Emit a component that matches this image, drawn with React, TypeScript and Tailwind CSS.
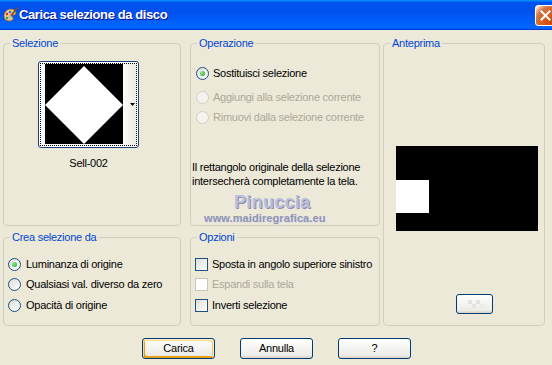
import React from 'react';
import clsx from 'clsx';

const Radio: React.FC<{ checked?: boolean; disabled?: boolean }> = ({ checked, disabled }) => (
  <span
    className={clsx(
      'w-[13px] h-[13px] rounded-full border flex items-center justify-center shrink-0',
      disabled
        ? 'border-[#d2d0c5] bg-[#f4f3ee]'
        : 'border-[#1c5180] bg-[linear-gradient(135deg,#dcdcd7,#ffffff)]'
    )}
  >
    {checked && <span className="w-[5px] h-[5px] rounded-full bg-[radial-gradient(circle_at_35%_35%,#8ee88e,#21a121)]" />}
  </span>
);

const Check: React.FC<{ disabled?: boolean }> = ({ disabled }) => (
  <span
    className={clsx(
      'w-[13px] h-[13px] border shrink-0',
      disabled ? 'border-[#cac8bb] bg-white' : 'border-[#1c5180] bg-[linear-gradient(135deg,#dcdcd7,#ffffff)]'
    )}
  />
);

const Group: React.FC<{ title: string; className?: string; children?: React.ReactNode }> = ({ title, className, children }) => (
  <fieldset className={clsx('border border-[#d0d0bf] rounded-[4px] relative', className)}>
    <legend className="ml-[6px] px-[2px] leading-[13px] text-[#0046d5]">{title}</legend>
    {children}
  </fieldset>
);

const XpButton: React.FC<{ label: string; isDefault?: boolean }> = ({ label, isDefault }) => (
  <button
    className={clsx(
      'w-[73px] h-[21px] border border-[#003c74] rounded-[3px] bg-[linear-gradient(180deg,#ffffff,#ecebe6_86%,#d6d0c5)] leading-none',
      isDefault && 'shadow-[inset_-1px_1px_#fff0cf,inset_1px_2px_#fdd889,inset_-2px_2px_#fbc761,inset_2px_-2px_#e5a01a]'
    )}
  >
    {label}
  </button>
);

const PaletteIcon = () => (
  <svg width="16" height="16" viewBox="0 0 16 16" className="shrink-0">
    <path d="M2 9c0-4 3-7 7-7 3 0 5 2 5 4s-2 2-3 2-1 2 0 3-1 3-4 3C4 14 2 12 2 9z" fill="#e9c98f" stroke="#8a5a2b" strokeWidth="0.8" />
    <circle cx="5" cy="7" r="1.2" fill="#e0262a" />
    <circle cx="8" cy="5" r="1.2" fill="#2a62e0" />
    <circle cx="11" cy="5" r="1.1" fill="#f3d21c" />
    <circle cx="5" cy="11" r="1.2" fill="#2aa842" />
    <path d="M15 1 L8 10" stroke="#7a4a1e" strokeWidth="1.6" strokeLinecap="round" />
    <path d="M8.5 9.3 L7 11.5" stroke="#c0c0c0" strokeWidth="2" strokeLinecap="round" />
  </svg>
);

const TitleBar = () => (
  <div className="h-[30px] flex items-center pl-[2px] bg-[linear-gradient(180deg,#0997ff,#0053ee_8%,#0050ee_40%,#0066ff_88%,#0066ff_93%,#005bff_95%,#003dd7_96%,#003dd7)]">
    <PaletteIcon />
    <span className="ml-[1px] text-white font-bold text-[13px] tracking-[-0.4px] [text-shadow:1px_1px_0_#0f1089]">
      Carica selezione da disco
    </span>
    <div className="ml-auto mr-[-4px] w-[21px] h-[21px] rounded-[3px] border border-white flex items-center justify-center bg-[radial-gradient(circle_at_90%_90%,#cc4600_0,#dc6527_55%,#cd7546_70%,#ffccb2_90%,#ffffff_100%)]">
      <svg width="11" height="11" viewBox="0 0 11 11">
        <path d="M1.5 1.5 L9.5 9.5 M9.5 1.5 L1.5 9.5" stroke="#fff" strokeWidth="2" strokeLinecap="square" />
      </svg>
    </div>
  </div>
);

const Thumbnail = () => (
  <div className="w-[101px] h-[87px] border border-[#1c3f75] rounded-[3px] bg-white p-[1px]">
    <div className="h-full border border-dotted border-black flex">
      <div className="ml-[4px] w-[78px] h-[80px] bg-black">
        <svg width="78" height="80" viewBox="0 0 78 80">
          <polygon points="39,2 78,41 39,80 0,41" fill="#fff" />
        </svg>
      </div>
      <div className="flex-1 bg-[linear-gradient(90deg,#fbfbf8,#ecebe5)] flex items-center justify-end pr-[1px]">
        <svg width="5" height="3" viewBox="0 0 5 3">
          <polygon points="0,0 5,0 2.5,3" fill="#000" />
        </svg>
      </div>
    </div>
  </div>
);

export default function App() {
  return (
    <div className="w-[552px] h-[365px] overflow-hidden bg-[#ece9d8] text-black text-[11px] tracking-[-0.25px] font-['Liberation_Sans',Arial,sans-serif]">
      <TitleBar />

      <div className="flex pl-[3px] pt-[7px]">
        <div className="w-[178px] flex flex-col gap-[5px]">
          <Group title="Selezione" className="h-[189px]">
            <div className="ml-[34px] mt-[11px] w-[101px] flex flex-col items-center">
              <Thumbnail />
              <span className="mt-[8px] leading-[14px]">Sell-002</span>
            </div>
          </Group>

          <Group title="Crea selezione da" className="h-[95px]">
            <div className="mt-[10px] pl-[4px] flex flex-col">
              <label className="h-[20px] flex items-center gap-[5px]">
                <Radio checked />
                <span>Luminanza di origine</span>
              </label>
              <label className="h-[21px] flex items-center gap-[5px]">
                <Radio />
                <span>Qualsiasi val. diverso da zero</span>
              </label>
              <label className="h-[20px] flex items-center gap-[5px]">
                <Radio />
                <span>Opacità di origine</span>
              </label>
            </div>
          </Group>
        </div>

        <div className="ml-[9px] w-[190px] flex flex-col gap-[5px]">
          <Group title="Operazione" className="h-[189px]">
            <div className="mt-[13px] pl-[5px] flex flex-col">
              <label className="h-[20px] flex items-center gap-[4px]">
                <Radio checked />
                <span>Sostituisci selezione</span>
              </label>
              <label className="mt-[4px] h-[20px] flex items-center gap-[4px] text-[#aca899]">
                <Radio disabled />
                <span>Aggiungi alla selezione corrente</span>
              </label>
              <label className="h-[21px] flex items-center gap-[4px] text-[#aca899]">
                <Radio disabled />
                <span>Rimuovi dalla selezione corrente</span>
              </label>
            </div>
            <p className="mt-[32px] pl-[1px] leading-[14px]">
              Il rettangolo originale della selezione
              <br />
              intersecherà completamente la tela.
            </p>
            <div className="absolute left-[43px] top-[143px] leading-none text-[18px] font-bold tracking-[0.3px] text-[#b9bddb] [text-shadow:1px_1px_0_#8a8eb0]">
              Pinuccia
            </div>
            <div className="absolute left-[13px] top-[163px] leading-none text-[11px] font-bold tracking-[0.1px] text-[#8f93b0] [text-shadow:1px_1px_0_#dcdde8]">
              www.maidiregrafica.eu
            </div>
          </Group>

          <Group title="Opzioni" className="h-[95px]">
            <div className="mt-[10px] pl-[4px] flex flex-col">
              <label className="h-[20px] flex items-center gap-[4px]">
                <Check />
                <span>Sposta in angolo superiore sinistro</span>
              </label>
              <label className="h-[21px] flex items-center gap-[4px] text-[#aca899]">
                <Check disabled />
                <span>Espandi sulla tela</span>
              </label>
              <label className="h-[20px] flex items-center gap-[4px]">
                <Check />
                <span>Inverti selezione</span>
              </label>
            </div>
          </Group>
        </div>

        <Group title="Anteprima" className="ml-[3px] w-[162px] h-[289px]">
          <div className="ml-[12px] mt-[96px] w-[142px] h-[85px] bg-black pt-[34px]">
            <div className="w-[33px] h-[33px] bg-white" />
          </div>
          <button className="ml-[72px] mt-[63px] w-[37px] h-[20px] border border-[#003c74] rounded-[3px] bg-[linear-gradient(180deg,#ffffff,#ecebe6_86%,#d6d0c5)] flex items-center justify-center">
            <svg width="22" height="12" viewBox="0 0 22 12">
              <rect x="4" y="2" width="4" height="4" fill="#e4e4e4" />
              <rect x="12" y="2" width="4" height="4" fill="#e4e4e4" />
              <rect x="8" y="6" width="4" height="4" fill="#e4e4e4" />
              <rect x="16" y="6" width="4" height="4" fill="#ececec" />
            </svg>
          </button>
        </Group>
      </div>

      <div className="flex pl-[142px] pt-[12px] gap-[25px]">
        <XpButton label="Carica" isDefault />
        <XpButton label="Annulla" />
        <XpButton label="?" />
      </div>
    </div>
  );
}
